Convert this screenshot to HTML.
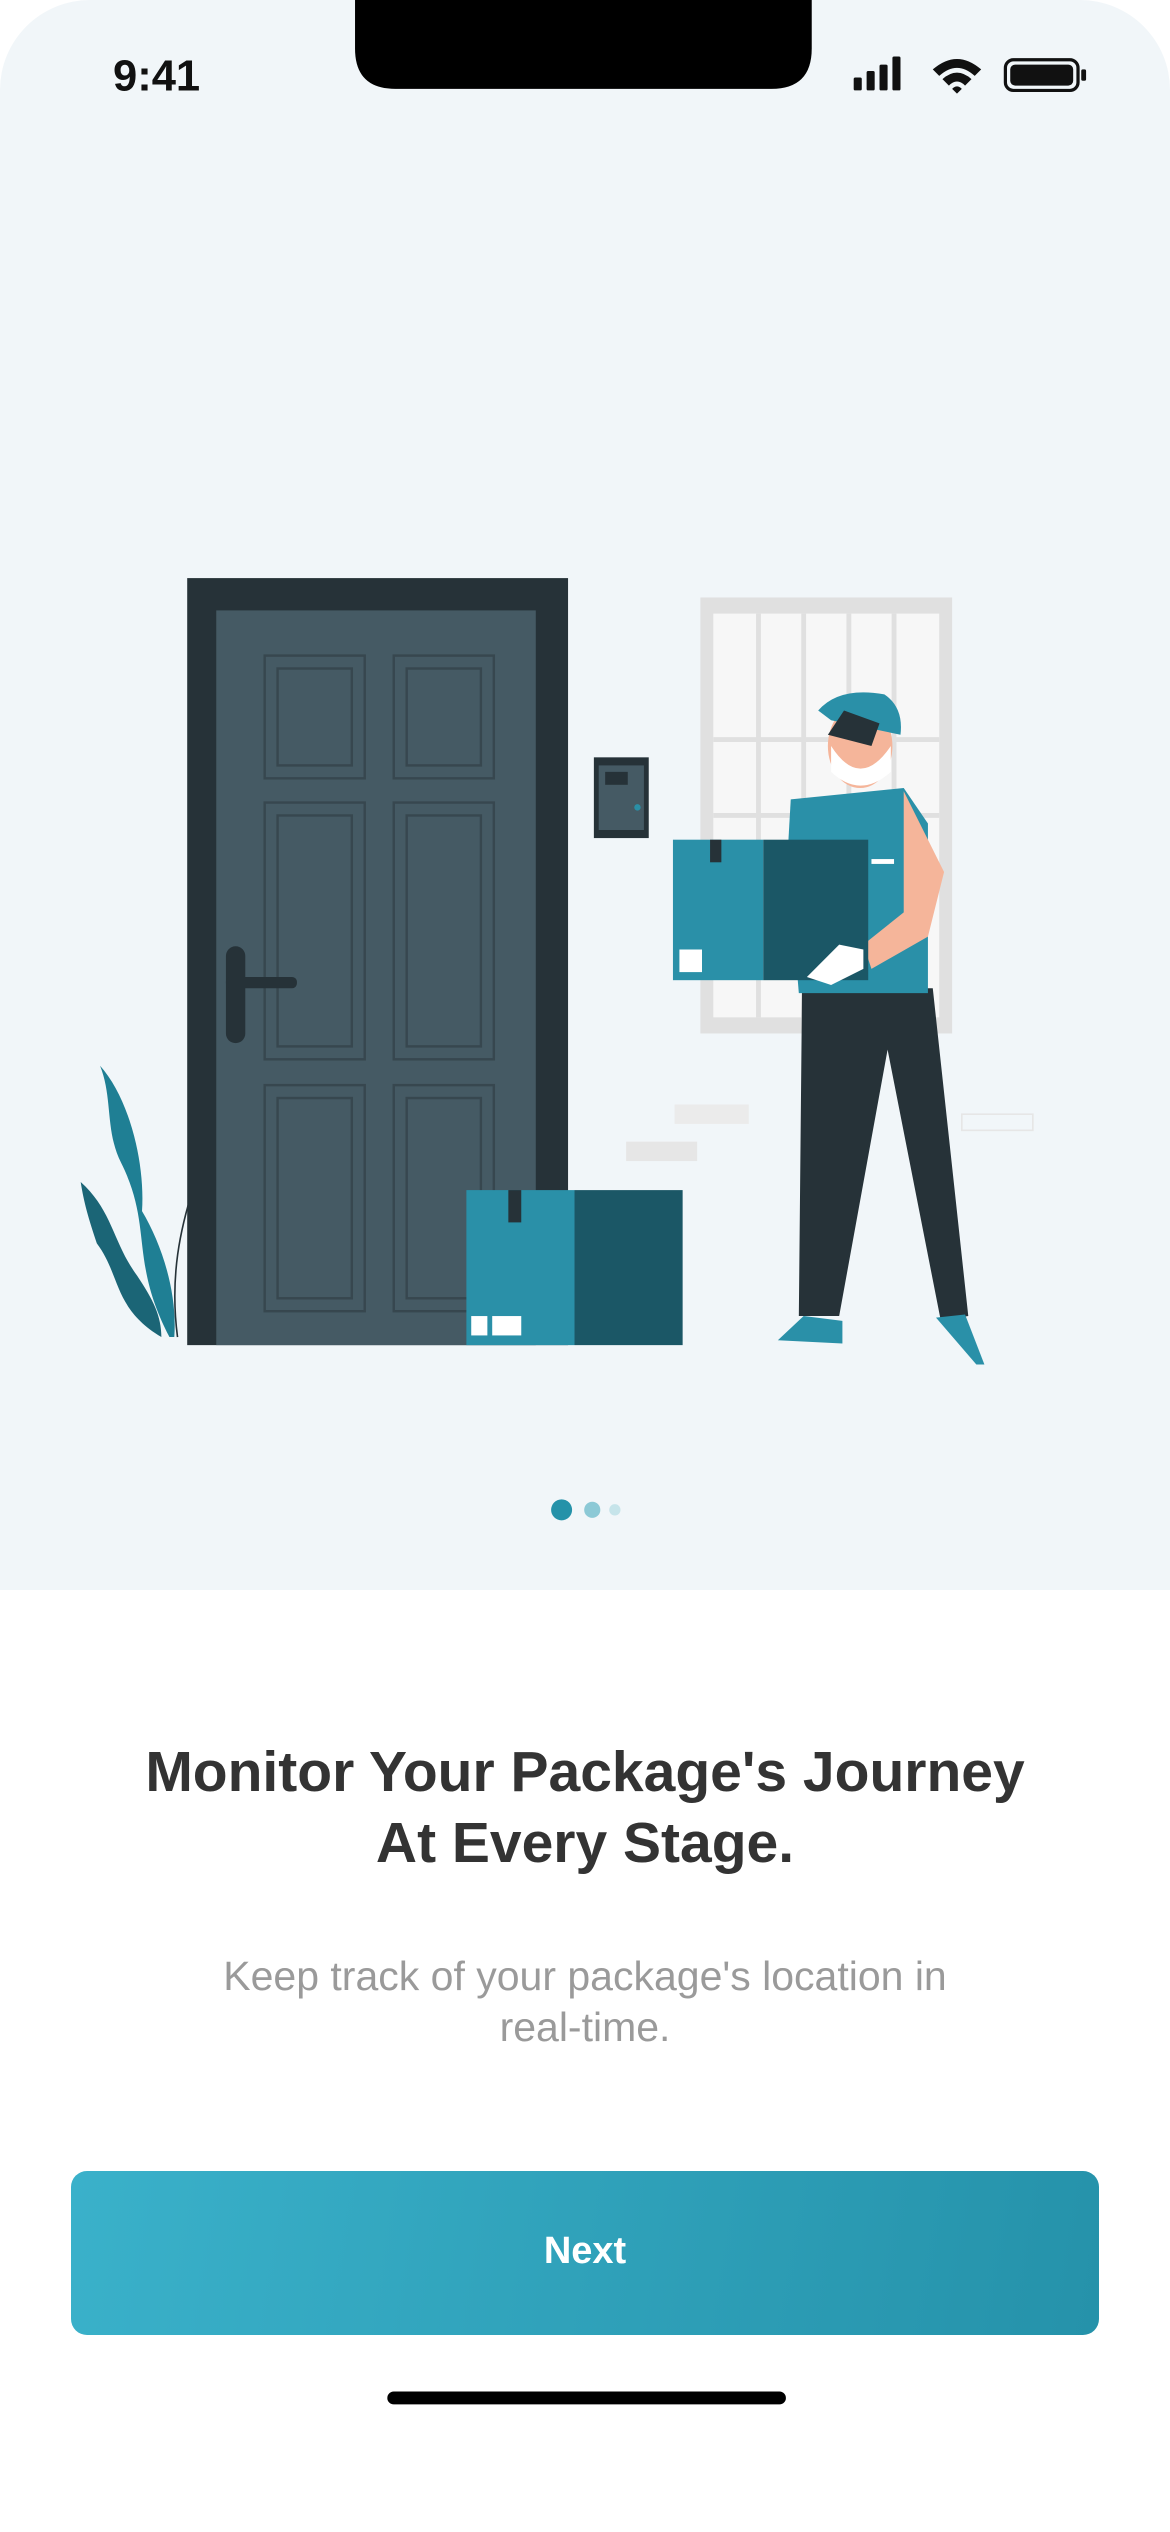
<!DOCTYPE html>
<html><head><meta charset="utf-8"><style>
html,body{margin:0;padding:0}
body{width:1170px;height:2532px;position:relative;overflow:hidden;background:#fff;font-family:"Liberation Sans",sans-serif}
.top{position:absolute;left:0;top:0;width:1170px;height:1590px;background:#f1f6f9;border-radius:90px 90px 0 0}
svg.ill{position:absolute;left:0;top:0;width:1170px;height:2532px}
.t{position:absolute;left:0;width:1170px;text-align:center}
</style></head><body>
<div class="top"></div>
<svg class="ill" viewBox="0 0 725 1568" preserveAspectRatio="none">
<path d="M220 0 H503 V30 Q503 55 478 55 H245 Q220 55 220 30 Z" fill="#000"/>
<text x="70" y="56" font-family="Liberation Sans" font-weight="bold" font-size="27" fill="#111">9:41</text>
<rect x="529" y="48" width="5" height="8" rx="1" fill="#111"/>
<rect x="537" y="44" width="5" height="12" rx="1" fill="#111"/>
<rect x="545" y="40" width="5" height="16" rx="1" fill="#111"/>
<rect x="553" y="35" width="5" height="21" rx="1" fill="#111"/>
<path d="M578 43 Q593 30 608 43 L604 47 Q593 37 582 47Z M584 49 Q593 41 602 49 L598 53 Q593 48 588 53Z M590 55 L593 58 L596 55 Q593 52 590 55Z" fill="#111"/>
<rect x="623" y="37" width="45" height="19" rx="5" fill="none" stroke="#111" stroke-width="2"/>
<rect x="626" y="40" width="39" height="13" rx="3" fill="#111"/>
<rect x="670" y="43" width="3" height="7" rx="1" fill="#111"/>
<rect x="434" y="370" width="156" height="270" fill="#e0e0e0"/>
<rect x="442" y="380" width="140" height="250" fill="#f7f7f7"/>
<g stroke="#e0e0e0" stroke-width="3"><line x1="470" y1="380" x2="470" y2="630"/><line x1="498" y1="380" x2="498" y2="630"/><line x1="526" y1="380" x2="526" y2="630"/><line x1="554" y1="380" x2="554" y2="630"/><line x1="442" y1="458" x2="582" y2="458"/><line x1="442" y1="505" x2="582" y2="505"/></g>
<rect x="388" y="707" width="44" height="12" fill="#e6e6e6"/><rect x="418" y="684" width="46" height="12" fill="#ebebeb"/>
<rect x="596" y="690" width="44" height="10" fill="none" stroke="#e6e6e6"/>
<rect x="116" y="358" width="236" height="475" fill="#263238"/>
<rect x="134" y="378" width="198" height="455" fill="#455a64"/>
<g fill="none" stroke="#37474f" stroke-width="1.5">
<rect x="164" y="406" width="62" height="76"/><rect x="172" y="414" width="46" height="60"/>
<rect x="244" y="406" width="62" height="76"/><rect x="252" y="414" width="46" height="60"/>
<rect x="164" y="497" width="62" height="159"/><rect x="172" y="505" width="46" height="143"/>
<rect x="244" y="497" width="62" height="159"/><rect x="252" y="505" width="46" height="143"/>
<rect x="164" y="672" width="62" height="140"/><rect x="172" y="680" width="46" height="124"/>
<rect x="244" y="672" width="62" height="140"/><rect x="252" y="680" width="46" height="124"/>
</g>
<rect x="140" y="586" width="12" height="60" rx="6" fill="#263238"/>
<rect x="140" y="605" width="44" height="7" rx="3" fill="#263238"/>
<rect x="368" y="469" width="34" height="50" fill="#263238"/>
<rect x="371" y="474" width="28" height="40" fill="#455a64"/>
<rect x="375" y="478" width="14" height="8" fill="#263238"/>
<circle cx="395" cy="500" r="2" fill="#2a8fa6"/>
<path d="M105 828 C80 780 95 760 75 720 C65 700 70 680 62 660 C80 680 90 720 88 750 C100 770 110 800 108 828Z" fill="#1f7f94"/>
<path d="M100 828 C70 810 75 790 60 770 C55 755 52 745 50 732 C70 750 70 770 85 790 C95 805 100 815 100 828Z" fill="#1b6576"/>
<path d="M110 828 C105 790 112 760 120 735" stroke="#263238" fill="none" stroke-width="1"/>
<rect x="289" y="737" width="67" height="96" fill="#2a90a8"/>
<rect x="356" y="737" width="67" height="96" fill="#1b5766"/>
<rect x="315" y="737" width="8" height="20" fill="#263238"/>
<rect x="292" y="815" width="10" height="12" fill="#fff"/><rect x="305" y="815" width="18" height="12" fill="#fff"/>
<path d="M497 612 L578 612 L600 815 L583 818 L550 650 L520 815 L495 815Z" fill="#263238"/>
<path d="M482 830 L498 815 L522 818 L522 832Z" fill="#2a90a8"/>
<path d="M580 816 L598 814 L610 845 L605 845 Z" fill="#2a90a8"/>
<path d="M490 495 L560 488 L575 510 L575 615 L495 615 L488 530Z" fill="#2a90a8"/>
<path d="M560 490 L585 540 L575 580 L540 600 L535 585 L560 565Z" fill="#f5b59a"/>
<ellipse cx="533" cy="462" rx="20" ry="26" fill="#f5b59a"/>
<path d="M515 462 Q533 490 552 462 L552 478 Q533 495 515 478Z" fill="#fff"/>
<path d="M507 440 Q520 425 548 430 Q560 438 558 455 L515 446 Z" fill="#2a90a8"/>
<path d="M513 455 L523 440 L545 448 L540 462 Z" fill="#263238"/>
<rect x="417" y="520" width="56" height="87" fill="#2a90a8"/>
<rect x="473" y="520" width="65" height="87" fill="#1b5766"/>
<rect x="440" y="520" width="7" height="14" fill="#263238"/>
<rect x="421" y="588" width="14" height="14" fill="#fff"/>
<path d="M500 605 L520 585 L535 588 L535 600 L515 610Z" fill="#fff"/>
<rect x="540" y="532" width="14" height="3" fill="#fff"/>
<circle cx="348" cy="935" r="6.5" fill="#2592a9"/>
<circle cx="367" cy="935" r="5" fill="#8cc9d6"/>
<circle cx="381" cy="935" r="3.5" fill="#c6e4ea"/>
<rect x="240" y="1481" width="247" height="8" rx="4" fill="#000"/>
</svg>
<div class="t" style="top:1737px;font-size:57px;font-weight:bold;color:#333;line-height:71px">Monitor Your Package's Journey<br>At Every Stage.</div>
<div class="t" style="top:1951px;font-size:41px;color:#9a9a9a;line-height:51px">Keep track of your package's location in<br>real-time.</div>
<div style="position:absolute;left:71px;top:2171px;width:1028px;height:164px;border-radius:16px;background:linear-gradient(100deg,#3ab1ca,#2592aa);color:#fff;font-size:38px;font-weight:bold;text-align:center;line-height:160px">Next</div>
</body></html>
